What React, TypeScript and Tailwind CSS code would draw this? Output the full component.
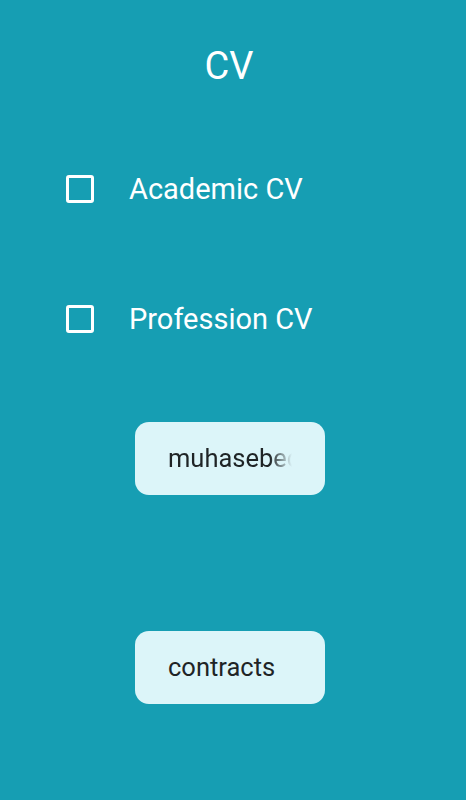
import React from 'react'

const options = ['Academic CV', 'Profession CV']

function CheckRow({ label }: { label: string }) {
    return (
        <label className='flex items-center h-[28px]'>
            <span className='w-[28px] h-[28px] border-[3px] border-white rounded-[3px] shrink-0' />
            <span className='ml-[35px] text-white text-[29px] leading-none'>{label}</span>
        </label>
    )
}

function FileButton({ name, faded }: { name: string; faded?: boolean }) {
    return (
        <button type='button' className='w-[190px] h-[73px] rounded-[14px] bg-[#dcf5f9] flex items-center pl-[33px]'>
            <span
                className={faded
                    ? 'block w-[124px] overflow-hidden whitespace-nowrap text-left text-[25.5px] text-[#1f2426] leading-tight'
                    : 'block whitespace-nowrap text-left text-[25.5px] text-[#1f2426] leading-tight'}
                style={faded ? { maskImage: 'linear-gradient(to right, black 82%, transparent 100%)' } : undefined}
            >
                {name}
            </span>
        </button>
    )
}

export default function App() {
    return (
        <div className='w-[466px] h-[800px] bg-[#169eb3] flex flex-col font-["Roboto",sans-serif]'>
            <h1 className='text-white text-[38px] leading-none text-center pt-[47px] pr-[8px]'>CV</h1>

            <div className='flex flex-col gap-[102px] mt-[90px] pl-[66px]'>
                {options.map((o) => (
                    <CheckRow key={o} label={o} />
                ))}
            </div>

            <div className='flex flex-col gap-[136px] mt-[89px] pl-[135px]'>
                <FileButton name='muhasebecv' faded />
                <FileButton name='contracts' />
            </div>
        </div>
    )
}
